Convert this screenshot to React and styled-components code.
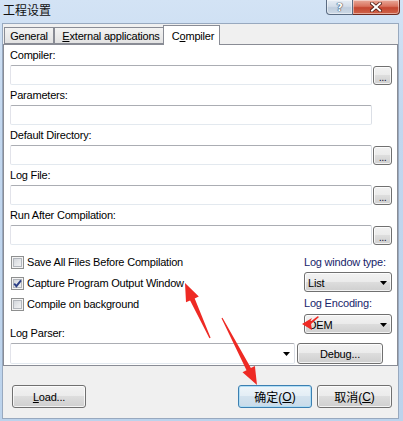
import React from 'react';
import styled, { createGlobalStyle } from 'styled-components';

const Global = createGlobalStyle`
  html, body { margin: 0; padding: 0; background: #fff; }
  body {
    font-family: "Liberation Sans", Arial, "Noto Sans CJK SC", sans-serif;
    font-size: 11px;
    letter-spacing: -0.2px;
    color: #000;
  }
  * { box-sizing: border-box; }
`;

const Window = styled.div`
  position: relative;
  width: 403px;
  height: 421px;
  overflow: hidden;
  display: flex;
  flex-direction: column;
  background: linear-gradient(to bottom, #d3e3f5 0%, #c2d7ef 30%, #bcd3ec 100%);
`;

const TitleBar = styled.div`
  flex: none;
  height: 23px;
  display: flex;
  align-items: flex-start;
  padding: 0 3px;
`;

const TitleText = styled.div`
  font-family: "Noto Sans CJK SC", sans-serif;
  font-size: 12px;
  letter-spacing: 0;
  line-height: 20px;
  color: #111;
`;

const CaptionButtons = styled.div`
  margin-left: auto;
  display: flex;
`;

const CaptionButton = styled.div`
  width: ${p => p.$w}px;
  height: 15px;
  display: flex;
  align-items: center;
  justify-content: center;
  border: 1px solid ${p => (p.$close ? '#6e2a1f' : '#5a6b82')};
  border-top: none;
  border-left-width: ${p => (p.$close ? 0 : 1)}px;
  border-radius: ${p => (p.$close ? '0 0 4px 0' : '0 0 0 4px')};
  background: ${p =>
    p.$close
      ? 'linear-gradient(to bottom, #e9a99a 0%, #d9725d 45%, #c44630 55%, #d0644a 100%)'
      : 'linear-gradient(to bottom, #e6edf5 0%, #d3dde9 45%, #bfcddd 55%, #cdd9e6 100%)'};
  box-shadow: inset 0 0 0 1px rgba(255, 255, 255, 0.45);
  color: #fff;
  font-family: "DejaVu Sans", sans-serif;
  font-weight: bold;
  font-size: 11px;
  line-height: 1;
  text-shadow: 0 0 1px #34465e, 0 0 1px #34465e, 0 0 1px #34465e;
`;

const Client = styled.div`
  flex: 1;
  margin: 0 4px 2px 2px;
  border: 1px solid #98a9bf;
  background: #f0f0f0;
  display: flex;
  flex-direction: column;
`;

const TabStrip = styled.div`
  flex: none;
  height: 20px;
  display: flex;
  align-items: flex-start;
  padding-left: 1px;
`;

const Tab = styled.div`
  position: relative;
  z-index: ${p => (p.$active ? 2 : 0)};
  width: ${p => p.$w}px;
  margin-left: ${p => (p.$active ? -1 : 0)}px;
  margin-top: ${p => (p.$active ? 1 : 3)}px;
  height: ${p => (p.$active ? 20 : 17)}px;
  margin-bottom: ${p => (p.$active ? -1 : 0)}px;
  border: 1px solid #898c95;
  border-bottom: ${p => (p.$active ? 'none' : '1px solid #898c95')};
  background: ${p =>
    p.$active ? '#fff' : 'linear-gradient(to bottom, #f3f3f3 0%, #ebebeb 50%, #e2e2e2 100%)'};
  display: flex;
  align-items: center;
  justify-content: center;
  padding-top: ${p => (p.$active ? 0 : 1)}px;
  padding-left: ${p => p.$shift || 0}px;
  white-space: nowrap;
  font-size: 11px;
`;

const U = styled.span`
  text-decoration: underline;
  text-underline-offset: 1px;
`;

const Panel = styled.div`
  position: relative;
  z-index: 1;
  background: #fff;
  border: 1px solid #898c95;
  padding: 0 5px 1px 6px;
  display: flex;
  flex-direction: column;
`;

const Field = styled.div`
  display: flex;
  flex-direction: column;
`;

const FieldLabel = styled.div`
  height: 20px;
  padding-top: 1px;
  line-height: 19px;
  white-space: nowrap;
  color: ${p => (p.$blue ? '#17246a' : '#000')};
`;

const InputRow = styled.div`
  height: 20px;
  display: flex;
  align-items: flex-start;
  gap: 1px;
`;

const TextBox = styled.div`
  flex: 1;
  height: 20px;
  margin-right: ${p => (p.$noBrowse ? 20 : 0)}px;
  border: 1px solid;
  border-color: #abadb3 #dbdfe6 #e3e9ef #e2e3ea;
  border-radius: 2px;
  background: #fff;
`;

const WinButton = styled.div`
  flex: none;
  width: ${p => p.$w}px;
  height: ${p => p.$h}px;
  margin-top: ${p => p.$mt || 0}px;
  display: flex;
  align-items: center;
  justify-content: center;
  border: 1px solid ${p => (p.$default ? '#3c7fb1' : '#707070')};
  border-radius: 3px;
  background: ${p =>
    p.$default
      ? 'linear-gradient(to bottom, #eef5fa 0%, #e3edf5 49%, #d3e2ee 50%, #c9dbe9 100%)'
      : 'linear-gradient(to bottom, #f2f2f2 0%, #ebebeb 49%, #dddddd 50%, #cfcfcf 100%)'};
  box-shadow: inset 0 0 0 1px ${p => (p.$default ? 'rgba(170,220,245,0.9)' : 'rgba(255,255,255,0.75)')};
  font-family: "Liberation Sans", Arial, "Noto Sans CJK SC", sans-serif;
  font-size: ${p => p.$fs || 11}px;
  letter-spacing: ${p => (p.$fs ? 0 : -0.2)}px;
  white-space: nowrap;
  color: #000;
`;

const Dots = styled.span`
  margin-top: 3px;
  letter-spacing: -0.5px;
  color: #1b1b3a;
`;

const Lower = styled.div`
  margin-top: 6px;
  display: flex;
`;

const LeftCol = styled.div`
  flex: 1;
  display: flex;
  flex-direction: column;
`;

const RightCol = styled.div`
  width: 88px;
  display: flex;
  flex-direction: column;
`;

const CheckRow = styled.div`
  height: 21px;
  display: flex;
  align-items: center;
  gap: 3px;
  white-space: nowrap;
`;

const CheckBox = styled.span`
  flex: none;
  width: 13px;
  height: 13px;
  margin-left: 1px;
  margin-top: 1px;
  border: 1px solid #8e8f8f;
  background: linear-gradient(135deg, #c9cdd3 0%, #e6e8eb 55%, #f7f7f7 100%);
  box-shadow: inset 0 0 0 1px #f4f4f4, inset 0 0 0 2px #b2b6bc;
  display: flex;
  align-items: center;
  justify-content: center;
`;

const ParserLabel = styled.div`
  margin-top: 9px;
  height: 20px;
  padding-top: 1px;
  line-height: 19px;
`;

const RightLabel = styled(FieldLabel)`
  height: 21px;
  line-height: 20px;
`;

const DropDown = styled.div`
  height: 20px;
  margin-top: ${p => p.$mt || 0}px;
  display: flex;
  align-items: center;
  justify-content: space-between;
  padding: 1px 4px 0 3px;
  border: 1px solid #707070;
  border-radius: 3px;
  background: linear-gradient(to bottom, #f2f2f2 0%, #ebebeb 49%, #dddddd 50%, #cfcfcf 100%);
  box-shadow: inset 0 0 0 1px rgba(255, 255, 255, 0.75);
`;

const ParserRow = styled.div`
  height: 21px;
  display: flex;
  gap: 2px;
  padding-right: 9px;
`;

const Combo = styled.div`
  flex: 1;
  height: 21px;
  display: flex;
  align-items: center;
  justify-content: flex-end;
  padding-right: 4px;
  border: 1px solid;
  border-color: #abadb3 #dbdfe6 #e3e9ef #e2e3ea;
  border-radius: 2px;
  background: #fff;
`;

const Footer = styled.div`
  flex: 1;
  display: flex;
  align-items: flex-start;
  padding: 19px 6px 0 9px;
  gap: 5px;
`;

const Spacer = styled.div`
  flex: 1;
`;

const Overlay = styled.svg`
  position: absolute;
  left: 0;
  top: 0;
  pointer-events: none;
  z-index: 10;
`;

const Arrow = () => (
  <svg width="7" height="4" viewBox="0 0 7 4">
    <path d="M0 0H7L3.5 4Z" fill="#000" />
  </svg>
);

const Check = () => (
  <svg width="9" height="9" viewBox="0 0 9 9">
    <path d="M1.2 4.6 L3.4 7.2 L8 1.4" fill="none" stroke="#2c3f86" strokeWidth="1.9" />
  </svg>
);

const fields = [
  { label: 'Compiler:', browse: true },
  { label: 'Parameters:', browse: false },
  { label: 'Default Directory:', browse: true },
  { label: 'Log File:', browse: true },
  { label: 'Run After Compilation:', browse: true },
];

const checks = [
  { label: 'Save All Files Before Compilation', checked: false },
  { label: 'Capture Program Output Window', checked: true },
  { label: 'Compile on background', checked: false },
];

export default function App() {
  return (
    <>
      <Global />
      <Window>
        <TitleBar>
          <TitleText>工程设置</TitleText>
          <CaptionButtons>
            <CaptionButton $w={27}>?</CaptionButton>
            <CaptionButton $w={47} $close>
              <svg width="12" height="10" viewBox="0 0 12 10">
                <path d="M2 1.5 L10 8.5 M10 1.5 L2 8.5" stroke="#4a1a12" strokeWidth="3.6" strokeLinecap="square" />
                <path d="M2 1.5 L10 8.5 M10 1.5 L2 8.5" stroke="#fff" strokeWidth="2" strokeLinecap="square" />
              </svg>
            </CaptionButton>
          </CaptionButtons>
        </TitleBar>
        <Client>
          <TabStrip>
            <Tab $w={50}>General</Tab>
            <Tab $w={110} $shift={4}><U>E</U>xternal applications</Tab>
            <Tab $w={57} $active $shift={3}>C<U>o</U>mpiler</Tab>
          </TabStrip>
          <Panel>
            {fields.map(f => (
              <Field key={f.label}>
                <FieldLabel>{f.label}</FieldLabel>
                <InputRow>
                  <TextBox $noBrowse={!f.browse} />
                  {f.browse && (
                    <WinButton $w={19} $h={19} $mt={1}>
                      <Dots>...</Dots>
                    </WinButton>
                  )}
                </InputRow>
              </Field>
            ))}
            <Lower>
              <LeftCol>
                {checks.map(c => (
                  <CheckRow key={c.label}>
                    <CheckBox>{c.checked && <Check />}</CheckBox>
                    {c.label}
                  </CheckRow>
                ))}
                <ParserLabel>Log Parser:</ParserLabel>
              </LeftCol>
              <RightCol>
                <RightLabel $blue>Log window type:</RightLabel>
                <DropDown>
                  <span>List</span>
                  <Arrow />
                </DropDown>
                <RightLabel $blue>Log Encoding:</RightLabel>
                <DropDown $mt={1}>
                  <span>OEM</span>
                  <Arrow />
                </DropDown>
              </RightCol>
            </Lower>
            <ParserRow>
              <Combo>
                <Arrow />
              </Combo>
              <WinButton $w={86} $h={21}>Debug...</WinButton>
            </ParserRow>
          </Panel>
          <Footer>
            <WinButton $w={74} $h={23}><U>L</U>oad...</WinButton>
            <Spacer />
            <WinButton $w={74} $h={23} $default $fs={12}>确定(<U>O</U>)</WinButton>
            <WinButton $w={75} $h={23} $fs={12}>取消(<U>C</U>)</WinButton>
          </Footer>
        </Client>
        <Overlay width="403" height="421" viewBox="0 0 403 421">
          <polygon
            fill="#ee2a24"
            points="185,283 198.8,296.5 194.7,298.4 210.6,337.8 209.4,338.2 190.1,300.4 186,302.3"
          />
          <polygon
            fill="#ee2a24"
            points="257,385 242.5,372.3 246.5,370.3 221.5,318.3 222.5,317.7 250.9,367.9 254.9,365.9"
          />
          <polygon fill="#ee2a24" points="302,324 312,318 310,322 318,316 318.8,317.2 311,324 312,330" />
        </Overlay>
      </Window>
    </>
  );
}
